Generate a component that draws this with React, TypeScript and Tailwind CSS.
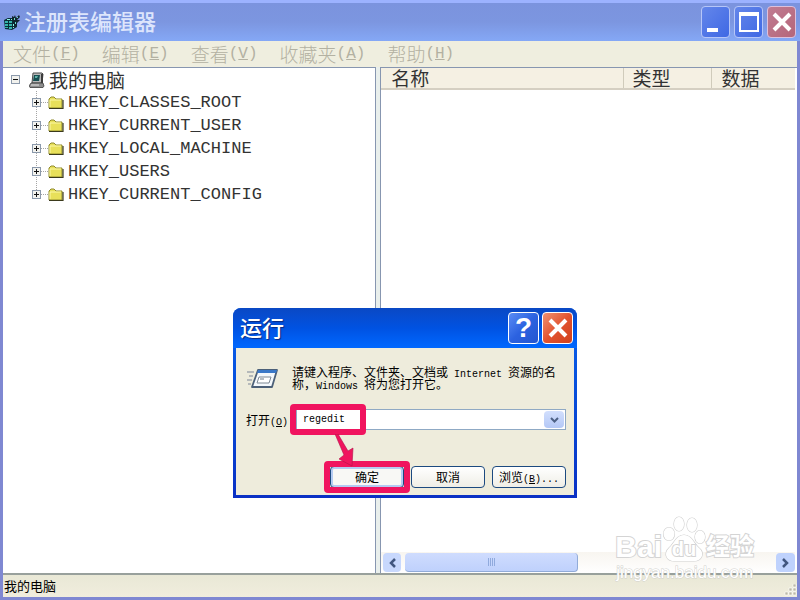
import React, { useState } from 'react';

const REGISTRY_KEYS = [
  'HKEY_CLASSES_ROOT',
  'HKEY_CURRENT_USER',
  'HKEY_LOCAL_MACHINE',
  'HKEY_USERS',
  'HKEY_CURRENT_CONFIG',
];

const MENUS = [
  { label: '文件', hotkey: 'F' },
  { label: '编辑', hotkey: 'E' },
  { label: '查看', hotkey: 'V' },
  { label: '收藏夹', hotkey: 'A' },
  { label: '帮助', hotkey: 'H' },
];

const RegeditIcon = () => (
  <svg width="17" height="18" viewBox="0 0 17 18" className="shrink-0" aria-hidden="true">
    <path d="M0 7 L4 5 H11 L13 8 V14 L8 17 L1 16 Z" fill="#0a2e36" />
    <path d="M1 8h3v2H1zM5 8h3v2H5zM1 11h3v2H1zM5 11h3v2H5zM1 14h3v1H1zM5 14h3v2H5z" fill="#35b5ac" />
    <path d="M3 6h3v1H3zM7 6h2v1H7zM9 11h1v2H9zM9 14h1v1H9z" fill="#8df0e2" />
    <path d="M8 3 L10 4 L11 2 L12 5 L15 2 L16 4 L13 7 L16 7 L13 10 L12 14 L10 13 V9 L8 7 Z" fill="#10242c" />
    <path d="M10 5h1v2h-1zM13 4h1v1h-1zM11 9h1v2h-1z" fill="#6adccd" />
  </svg>
);

const ComputerIcon = () => (
  <svg width="16" height="16" viewBox="0 0 16 16" className="shrink-0" aria-hidden="true">
    <path d="M4 1 L13 1 L14 2 L13 11 L3 11 Z" fill="#b9b9b9" stroke="#4a4a4a" />
    <path d="M5 3h6l-1 6H4z" fill="#174f52" />
    <path d="M6 4h3L8 6H6z" fill="#5fb3a8" />
    <path d="M12 2h2v9h-2z" fill="#3c3c3c" />
    <path d="M2 11 L14 11 L15 14 L14 15.500 L1 15.500 L0 14 Z" fill="#8d8d8d" stroke="#3c3c3c" strokeWidth=".8" />
    <path d="M2 13h8" stroke="#e5e5e5" />
  </svg>
);

const FolderIcon = () => (
  <svg width="16" height="14" viewBox="0 0 16 14" className="shrink-0" aria-hidden="true">
    <path d="M1 12 V3 L3 1 H6 L8 3 H14 V12 Z" fill="#e8e05a" stroke="#8f8a2c" />
    <path d="M2 11 V4 H13" stroke="#fbf7a6" fill="none" />
    <path d="M1 12.500 H15 V4" stroke="#3b3a1c" fill="none" strokeWidth="1.200" />
  </svg>
);

const RunIcon = () => (
  <svg width="34" height="24" viewBox="0 0 34 24" className="shrink-0" aria-hidden="true">
    <path d="M1 6h7M3 10h4M1 14h5M2 18h3" stroke="#a3a8ae" strokeWidth="1.500" />
    <path d="M12 4 H31 L26 21 H6 Z" fill="#f4f8fc" stroke="#4c6078" strokeWidth="1.800" strokeLinejoin="round" />
    <path d="M12 4 H31 L30 7 H11Z" fill="#3a78c8" />
    <path d="M13 11 H25 L23 17 H11Z" fill="#fff" stroke="#7d8894" />
    <path d="M14 13h4" stroke="#6c7a88" />
  </svg>
);

const CloseGlyph = () => (
  <svg width="22" height="22" viewBox="0 0 22 22" aria-hidden="true">
    <path d="M3 3 L19 19 M19 3 L3 19" stroke="#fff" strokeWidth="4" />
  </svg>
);

const Expander = ({ open, label }: { open: boolean; label: string }) => (
  <button aria-label={label} className="relative flex h-[9px] w-[9px] shrink-0 items-center justify-center border border-[#8b99ab] bg-[#f2f2ee]">
    <svg width="5" height="5" viewBox="0 0 5 5" aria-hidden="true">
      <path d={open ? 'M0 2h5v1H0z' : 'M0 2h5v1H0zM2 0h1v5H2z'} fill="#111" />
    </svg>
  </button>
);

// zero line height keeps the smaller Latin run from stretching the line
const Latin = ({ children }: { children: React.ReactNode }) => (
  <span className="whitespace-pre font-['Liberation_Mono',monospace] text-[10px] leading-[0px]">{children}</span>
);

const Hotkey = ({ letter }: { letter: string }) => (
  <>(<span className="underline">{letter}</span>)</>
);

const Watermark = () => (
  <div className="pointer-events-none absolute bottom-[17px] right-[46px] font-['Liberation_Sans','Noto_Sans_CJK_SC',sans-serif] text-white [paint-order:stroke] [-webkit-text-stroke:2px_#d4d4d4]">
    <div className="flex items-end font-bold">
      <span className="text-[30px] leading-8">Bai</span>
      <div className="relative flex h-[49px] w-[44px] items-end justify-center">
        <svg width="44" height="48" viewBox="0 0 44 48" className="absolute left-0 top-0" aria-hidden="true">
          <g fill="#fff" stroke="#cfcfcf" strokeWidth="1.200">
            <ellipse cx="7" cy="20" rx="5.500" ry="6.500" />
            <ellipse cx="17" cy="10" rx="5" ry="7" />
            <ellipse cx="30" cy="11" rx="5" ry="7" />
            <ellipse cx="38" cy="23" rx="5" ry="6.500" />
            <path d="M22 21 C14 21 12 30 7 34 C1 40 5 47 12 47 C17 47 27 47 32 47 C40 47 43 39 37 34 C32 30 30 21 22 21Z" />
          </g>
        </svg>
        <span className="relative text-xl leading-7">du</span>
      </div>
      <span className="text-2xl leading-8">经验</span>
    </div>
    <p className="text-center text-[17px] leading-5 [-webkit-text-stroke:1px_#d2d2ce]">jingyan.baidu.com</p>
  </div>
);

const RunDialog = () => {
  const [command, setCommand] = useState('regedit');

  return (
    <section
      aria-label="运行"
      className="absolute left-[233px] top-[308px] w-[344px] rounded-t-lg bg-gradient-to-b from-[#0a63ee] to-[#0a30c4] px-[3px] pb-[3px]"
    >
      <header className="-mx-[3px] flex h-10 items-center justify-between rounded-t-lg bg-gradient-to-b from-[#0a48c4] via-[#0052e2] to-[#0068ff] pl-[7px] pr-[4px]">
        <h2 className="pb-1 text-[22px] font-medium leading-8 text-white [text-shadow:1px_1px_1px_#0a2a80]">运行</h2>
        <div className="flex gap-[3px]">
          <button aria-label="帮助" className="flex h-8 w-[31px] items-center justify-center rounded-sm border border-white bg-gradient-to-br from-[#5a8cf5] via-[#2c62e0] to-[#2456d0] font-['Liberation_Sans',sans-serif] text-[28px] font-bold leading-8 text-white">
            ?
          </button>
          <button aria-label="关闭" className="flex h-8 w-[31px] items-center justify-center rounded-sm border border-white bg-gradient-to-br from-[#f09070] via-[#e2532f] to-[#d0401c]">
            <CloseGlyph />
          </button>
        </div>
      </header>

      <div className="bg-[#eeecdc] pb-[7px] pl-[10px] pr-[8px] pt-[18px] text-xs leading-3 text-black">
        <div className="flex gap-3">
          <RunIcon />
          <p className="whitespace-nowrap">
            请键入程序、文件夹、文档或<Latin> Internet </Latin>资源的名
            <br />
            称，<Latin>Windows </Latin>将为您打开它。
          </p>
        </div>

        <div className="mt-[19px] flex items-center">
          <label htmlFor="command" className="w-[50px] whitespace-nowrap">
            打开<Latin><Hotkey letter="O" /></Latin>
          </label>
          <div className="relative flex h-[21px] flex-1 border border-[#8fa9c4] bg-white p-px">
            <input
              id="command"
              value={command}
              onChange={e => setCommand(e.target.value)}
              className="min-w-0 flex-1 pl-[5px] font-['Liberation_Mono',monospace] text-[10px] outline-none"
            />
            <button aria-label="展开" className="flex w-5 items-center justify-center rounded-sm bg-gradient-to-b from-[#d2dffd] to-[#b4c8f6]">
              <svg width="9" height="6" viewBox="0 0 9 6" aria-hidden="true">
                <path d="M1 1 L4.500 4.500 L8 1" stroke="#4d6185" strokeWidth="2" fill="none" />
              </svg>
            </button>
            <span className="pointer-events-none absolute -left-[7px] -top-[6px] h-[31px] w-[76px] rounded-sm border-[6px] border-[#f0145f]" />
            <svg width="20" height="34" viewBox="0 0 20 34" className="pointer-events-none absolute left-[38px] top-[24px] z-10" aria-hidden="true">
              <path d="M0 0 L3 0 L13 17 L18 14 L17 32 L4 25 L9 21 Z" fill="#f0145f" stroke="#b01048" strokeWidth=".6" />
            </svg>
          </div>
        </div>

        <div className="mt-9 flex justify-end gap-[7px]">
          <button className="relative h-[22px] w-[74px] rounded-sm border border-[#1c4a80] bg-[#f8f8f5] shadow-[inset_0_0_0_2px_#b5cbf2]">
            确定
            <span className="pointer-events-none absolute -inset-x-[7px] -inset-y-[6px] rounded-sm border-[6px] border-[#f0145f]" />
          </button>
          <button className="h-[22px] w-[74px] rounded-sm border border-[#1c4a80] bg-gradient-to-b from-white to-[#efeee6]">取消</button>
          <button className="h-[22px] w-[74px] whitespace-nowrap rounded-sm border border-[#1c4a80] bg-gradient-to-b from-white to-[#efeee6]">
            浏览<Latin><Hotkey letter="B" />...</Latin>
          </button>
        </div>
      </div>
    </section>
  );
};

export default function App() {
  return (
    <div className="relative flex h-screen w-full flex-col bg-[#7f88d2] px-[3px] pb-[3px] font-['Noto_Sans_CJK_SC',sans-serif]">
      <header className="-mx-[3px] flex h-[41px] shrink-0 items-center justify-between border-t-[3px] border-[#9cb2ff] bg-gradient-to-b from-[#7b93de] via-[#7c96e0] to-[#85a8f6] pl-1 pr-[4px]">
        <div className="flex items-center gap-[3px]">
          <RegeditIcon />
          <h1 className="pb-1 text-[22px] font-medium leading-8 text-[#dde5fc]">注册表编辑器</h1>
        </div>
        <div className="flex gap-1">
          <button aria-label="最小化" className="flex h-8 w-[29px] items-end rounded-sm border border-[#b6c6f8] bg-gradient-to-br from-[#6486ea] to-[#3f68e4] pb-[5px] pl-[5px]">
            <span className="h-1 w-[11px] bg-white" />
          </button>
          <button aria-label="最大化" className="flex h-8 w-[29px] items-center justify-center rounded-sm border border-[#b6c6f8] bg-gradient-to-br from-[#6486ea] to-[#3f68e4]">
            <span className="h-5 w-5 border-2 border-t-4 border-white" />
          </button>
          <button aria-label="关闭" className="flex h-8 w-[29px] items-center justify-center rounded-sm border border-[#dcc0dc] bg-gradient-to-br from-[#c07c92] to-[#b5667a]">
            <CloseGlyph />
          </button>
        </div>
      </header>

      <nav className="flex h-[26px] shrink-0 items-center gap-[22px] bg-[#efeedf] pl-[10px] text-[19px] leading-6 text-[#b3b1a2]">
        {MENUS.map(menu => (
          <button key={menu.hotkey} className="flex items-center whitespace-nowrap font-light">
            {menu.label}
            <span className="font-['Liberation_Mono',monospace] text-base"><Hotkey letter={menu.hotkey} /></span>
          </button>
        ))}
      </nav>

      <main className="flex min-h-0 flex-1 gap-1 bg-[#e9efec]">
        <div className="w-[47%] border-r border-t border-[#8796b0] bg-white text-[#333]">
          <div className="flex h-[23px] items-center pl-2 text-[19px] leading-[23px]">
            <Expander open label="折叠" />
            <span className="ml-[9px] flex items-center gap-1"><ComputerIcon />我的电脑</span>
          </div>
          <ul className="relative pl-[29px]">
            <li aria-hidden="true" className="absolute bottom-3 left-[33px] top-0 border-l border-dotted border-[#a5a5a5]" />
            {REGISTRY_KEYS.map(key => (
              <li key={key} className="flex h-[23px] items-center font-['Liberation_Mono',monospace] text-[17px] leading-[23px]">
                <Expander open={false} label={key} />
                <span className="w-[7px] border-t border-dotted border-[#a5a5a5]" />
                <FolderIcon />
                <span className="ml-1">{key}</span>
              </li>
            ))}
          </ul>
        </div>

        <div className="flex min-w-0 flex-1 flex-col border-l border-t border-[#8796b0] bg-white pr-[2px]">
          <table className="w-full table-fixed text-left text-[19px] leading-[20px] text-[#333]">
            <thead>
              <tr className="h-[21px] border-b-2 border-[#d5cfc2] bg-[#f5f0e3]">
                <th className="p-0 pl-[10px] font-normal">名称</th>
                <th className="w-[88px] border-l border-[#d0cbbb] p-0 pl-[9px] font-normal">类型</th>
                <th className="w-[84px] border-l border-[#d0cbbb] p-0 pl-[10px] font-normal">数据</th>
              </tr>
            </thead>
          </table>
          <div className="mt-auto flex h-[21px] items-center gap-1 bg-gradient-to-b from-[#f8f5f0] to-white pl-[2px]">
            <button aria-label="向左滚动" className="flex h-[19px] w-[18px] items-center justify-center rounded-sm bg-[#c8d8fd]">
              <svg width="7" height="10" viewBox="0 0 7 10" aria-hidden="true"><path d="M6 1 L2 5 L6 9" stroke="#41567f" strokeWidth="2.500" fill="none" /></svg>
            </button>
            <div className="flex h-[19px] w-[42%] items-center justify-center gap-px rounded-sm border-b border-r border-[#91abd8] bg-gradient-to-b from-[#cfdcfe] to-[#bfd1fc]">
              <span className="h-2 w-px bg-[#90aadd]" />
              <span className="h-2 w-px bg-[#90aadd]" />
              <span className="h-2 w-px bg-[#90aadd]" />
              <span className="h-2 w-px bg-[#90aadd]" />
            </div>
            <button aria-label="向右滚动" className="ml-auto flex h-[19px] w-[19px] items-center justify-center rounded-sm bg-[#bfd2fd]">
              <svg width="7" height="10" viewBox="0 0 7 10" aria-hidden="true"><path d="M1 1 L5 5 L1 9" stroke="#41567f" strokeWidth="2.500" fill="none" /></svg>
            </button>
          </div>
        </div>
      </main>

      <footer className="flex h-6 shrink-0 items-center justify-between border-t-2 border-[#98a09c] bg-gradient-to-b from-[#e9e8d6] to-[#f0eddd] pl-px text-[13px] leading-5 text-black">
        <span>我的电脑</span>
        <svg width="13" height="13" viewBox="0 0 13 13" className="self-end" aria-hidden="true">
          <path d="M9 0h3v3H9zM5 4h3v3H5zM9 4h3v3H9zM1 8h3v3H1zM5 8h3v3H5zM9 8h3v3H9z" fill="#bdb9a6" stroke="#fff" strokeWidth=".6" />
        </svg>
      </footer>

      <Watermark />
      <RunDialog />
    </div>
  );
}
